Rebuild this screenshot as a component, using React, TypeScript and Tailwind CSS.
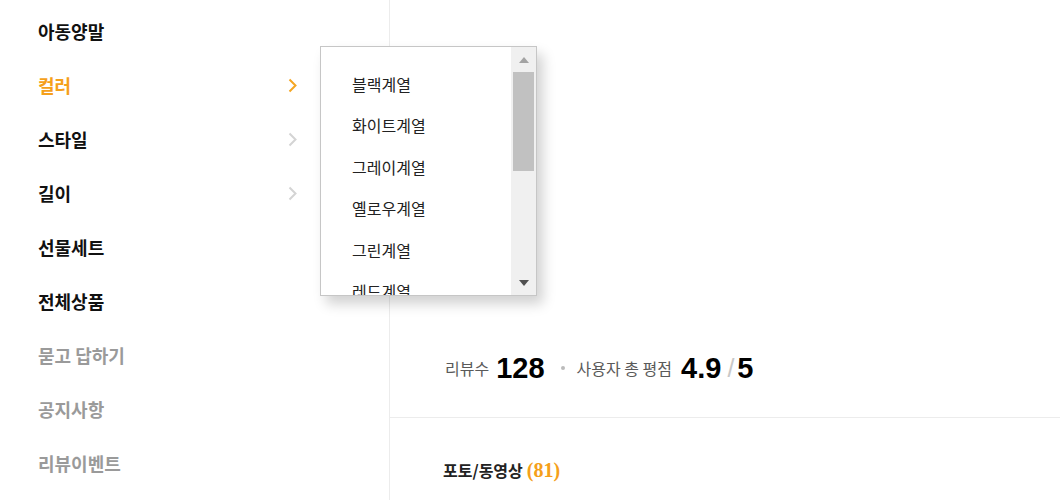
import React from "react";

const KR = { fontFamily: '"Noto Sans CJK KR", "Noto Sans", sans-serif' };
const NUM = { fontFamily: '"Liberation Sans", Arial, sans-serif' };

function Chevron({ color }: { color: string }) {
  return (
    <svg width="9" height="15" viewBox="0 0 9 15" fill="none">
      <polyline points="1.5,1.5 7.5,7.5 1.5,13.5" stroke={color} strokeWidth="2" fill="none" />
    </svg>
  );
}

const menu: { label: string; cls: string; chevron?: string }[] = [
  { label: "아동양말", cls: "text-[#111]" },
  { label: "컬러", cls: "text-[#f5a01a]", chevron: "#f5a623" },
  { label: "스타일", cls: "text-[#111]", chevron: "#d4d4d4" },
  { label: "길이", cls: "text-[#111]", chevron: "#d4d4d4" },
  { label: "선물세트", cls: "text-[#111]" },
  { label: "전체상품", cls: "text-[#111]" },
  { label: "묻고 답하기", cls: "text-[#9a9a9a]" },
  { label: "공지사항", cls: "text-[#9a9a9a]" },
  { label: "리뷰이벤트", cls: "text-[#9a9a9a]" },
];

const colors = ["블랙계열", "화이트계열", "그레이계열", "옐로우계열", "그린계열", "레드계열"];

export default function App() {
  return (
    <div className="relative w-[1060px] h-[500px] bg-white overflow-hidden flex" style={KR}>
      <aside className="w-[390px] h-full border-r border-[#ececec] pt-[4px] shrink-0">
        {menu.map((m) => (
          <div key={m.label} className="h-[54px] flex items-center pl-[38px] pr-[92px] justify-between">
            <span className={`text-[18px] leading-[22px] font-bold ${m.cls}`}>{m.label}</span>
            {m.chevron && <Chevron color={m.chevron} />}
          </div>
        ))}
      </aside>

      <main className="flex-1 pt-[338px]">
        <div className="h-[60px] flex items-center pl-[55px]">
          <span className="text-[16px] text-[#5a5a5a] leading-[20px]">리뷰수</span>
          <span className="ml-[7px] text-[29px] font-bold text-black leading-[28px]" style={NUM}>
            128
          </span>
          <span className="ml-[16px] w-[4px] h-[4px] rounded-full bg-[#bbb]" />
          <span className="ml-[12px] text-[16px] text-[#5a5a5a] leading-[20px]">사용자 총 평점</span>
          <span className="ml-[9px] text-[29px] font-bold text-black leading-[28px]" style={NUM}>
            4.9
          </span>
          <span className="ml-[6px] text-[25px] text-[#c8c8c8] leading-[28px]" style={NUM}>
            /
          </span>
          <span className="ml-[3px] text-[29px] font-bold text-black leading-[28px]" style={NUM}>
            5
          </span>
        </div>
        <div className="mt-[19px] border-t border-[#ececec] pt-[42px] pl-[53px] flex items-center">
          <span className="text-[16px] font-bold text-[#222] leading-[20px]">포토/동영상</span>
          <span
            className="ml-[4px] text-[20px] font-bold text-[#f5a01a] leading-[20px]"
            style={{ fontFamily: '"Liberation Serif", "Times New Roman", serif' }}
          >
            (81)
          </span>
        </div>
      </main>

      {/* dropdown */}
      <div className="absolute left-[320px] top-[46px] w-[217px] h-[250px] bg-white border border-[#c6c6c6] shadow-[6px_8px_12px_rgba(0,0,0,0.18)] flex overflow-hidden">
        <div className="flex-1 pt-[16px] pl-[31px]">
          {colors.map((c) => (
            <div key={c} className="h-[41.5px] flex items-center text-[16px] text-[#222] leading-[20px]">
              {c}
            </div>
          ))}
        </div>
        <div className="w-[25px] h-full bg-[#f0f0f0] flex flex-col items-center">
          <div className="h-[25px] flex items-center justify-center">
            <svg width="10" height="6" viewBox="0 0 10 6">
              <polygon points="5,0 10,6 0,6" fill="#a3a3a3" />
            </svg>
          </div>
          <div className="w-[21px] h-[99px] bg-[#c1c1c1]" />
          <div className="flex-1" />
          <div className="h-[25px] flex items-center justify-center">
            <svg width="10" height="6" viewBox="0 0 10 6">
              <polygon points="0,0 10,0 5,6" fill="#505050" />
            </svg>
          </div>
        </div>
      </div>
    </div>
  );
}
